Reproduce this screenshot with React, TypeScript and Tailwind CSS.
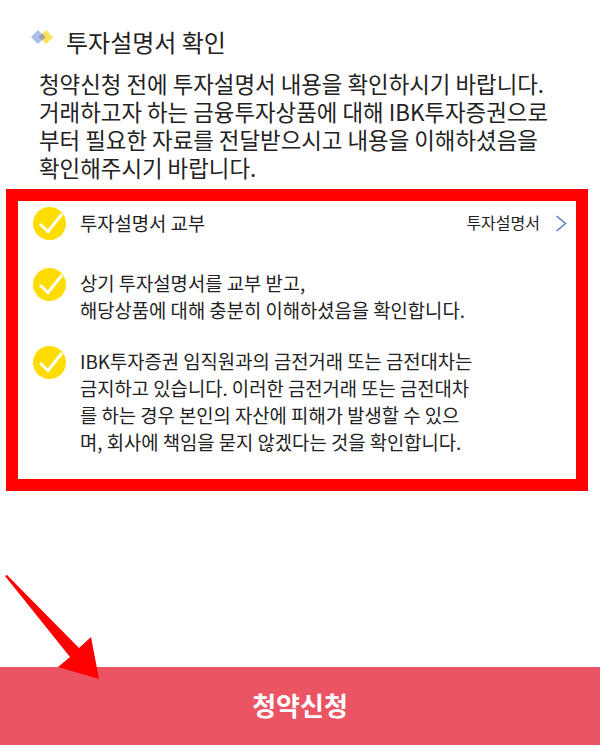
const FONT = "font-['Noto_Sans_CJK_KR','Noto_Sans_CJK_SC',sans-serif]"

function CheckBadge() {
  return (
    <svg width="33" height="33" viewBox="0 0 33 33" className="shrink-0">
      <circle cx="16.5" cy="16.5" r="16.5" fill="#ffdc00" />
      <path d="M7 17 L15 24.5 L29 7" fill="none" stroke="#fff" strokeWidth="3" />
    </svg>
  )
}

function Row({ children, className }: { children: React.ReactNode; className?: string }) {
  return (
    <div className={`flex items-start ${className ?? ""}`}>
      <CheckBadge />
      <div className="ml-[14px] text-[18.8px] leading-[27px] text-[#222]">{children}</div>
    </div>
  )
}

export default function App() {
  return (
    <div className={`relative w-[600px] h-[754px] bg-white overflow-hidden ${FONT}`}>
      <div className="flex items-start pt-[26px] pl-[31px]">
        <svg width="22" height="14" viewBox="0 0 22 14" className="mt-[4px]">
          <path d="M15 0 L22 7 L15 14 L8 7 Z" fill="#ffdf5c" />
          <path d="M7 0 L14 7 L7 14 L0 7 Z" fill="#a9bde6" />
          <path d="M11 3.5 L14.5 7 L11 10.5 L7.5 7 Z" fill="#9ca3a8" />
        </svg>
        <h1 className="ml-[13px] text-[24px] leading-[32px] font-normal text-[#222]">투자설명서 확인</h1>
      </div>

      <p className="mt-[11px] px-[39px] text-[22.4px] leading-[28px] text-[#222] whitespace-nowrap">
        청약신청 전에 투자설명서 내용을 확인하시기 바랍니다.
        <br />
        거래하고자 하는 금융투자상품에 대해 IBK투자증권으로
        <br />
        부터 필요한 자료를 전달받으시고 내용을 이해하셨음을
        <br />
        확인해주시기 바랍니다.
      </p>

      <div className="ml-[6px] mt-[8px] w-[582px] h-[302px] border-[12px] border-[#ff0000] pt-[6px] pl-[15px]">
        <Row className="h-[61px]">
          <div className="w-[487px] flex items-center justify-between h-[31px]">
            <span>투자설명서 교부</span>
            <span className="flex items-center text-[16px]">
              투자설명서
              <svg width="12" height="17" viewBox="0 0 12 17" className="ml-[15px] mt-[2px]">
                <path d="M1.5 1 L10.5 8.5 L1.5 16" fill="none" stroke="#5b80c8" strokeWidth="1.6" />
              </svg>
            </span>
          </div>
        </Row>
        <Row className="h-[78px]">
          <div className="whitespace-nowrap mt-[1px]">
            상기 투자설명서를 교부 받고,
            <br />
            해당상품에 대해 충분히 이해하셨음을 확인합니다.
          </div>
        </Row>
        <Row>
          <div className="whitespace-nowrap mt-[1px]">
            IBK투자증권 임직원과의 금전거래 또는 금전대차는
            <br />
            금지하고 있습니다. 이러한 금전거래 또는 금전대차
            <br />
            를 하는 경우 본인의 자산에 피해가 발생할 수 있으
            <br />
            며, 회사에 책임을 묻지 않겠다는 것을 확인합니다.
          </div>
        </Row>
      </div>

      <button className="block mt-[176px] w-full h-[78px] pb-[3px] bg-[#eb5463] text-white text-[26px] font-bold leading-none">
        청약신청
      </button>

      {/* annotation arrow over the button */}
      <svg width="600" height="754" className="absolute top-0 left-0 pointer-events-none">
        <path d="M5 576 L7 575 L79 648 L91 637 L99 679 L58 667 L70 657 Z" fill="#ff0000" />
      </svg>
    </div>
  )
}
